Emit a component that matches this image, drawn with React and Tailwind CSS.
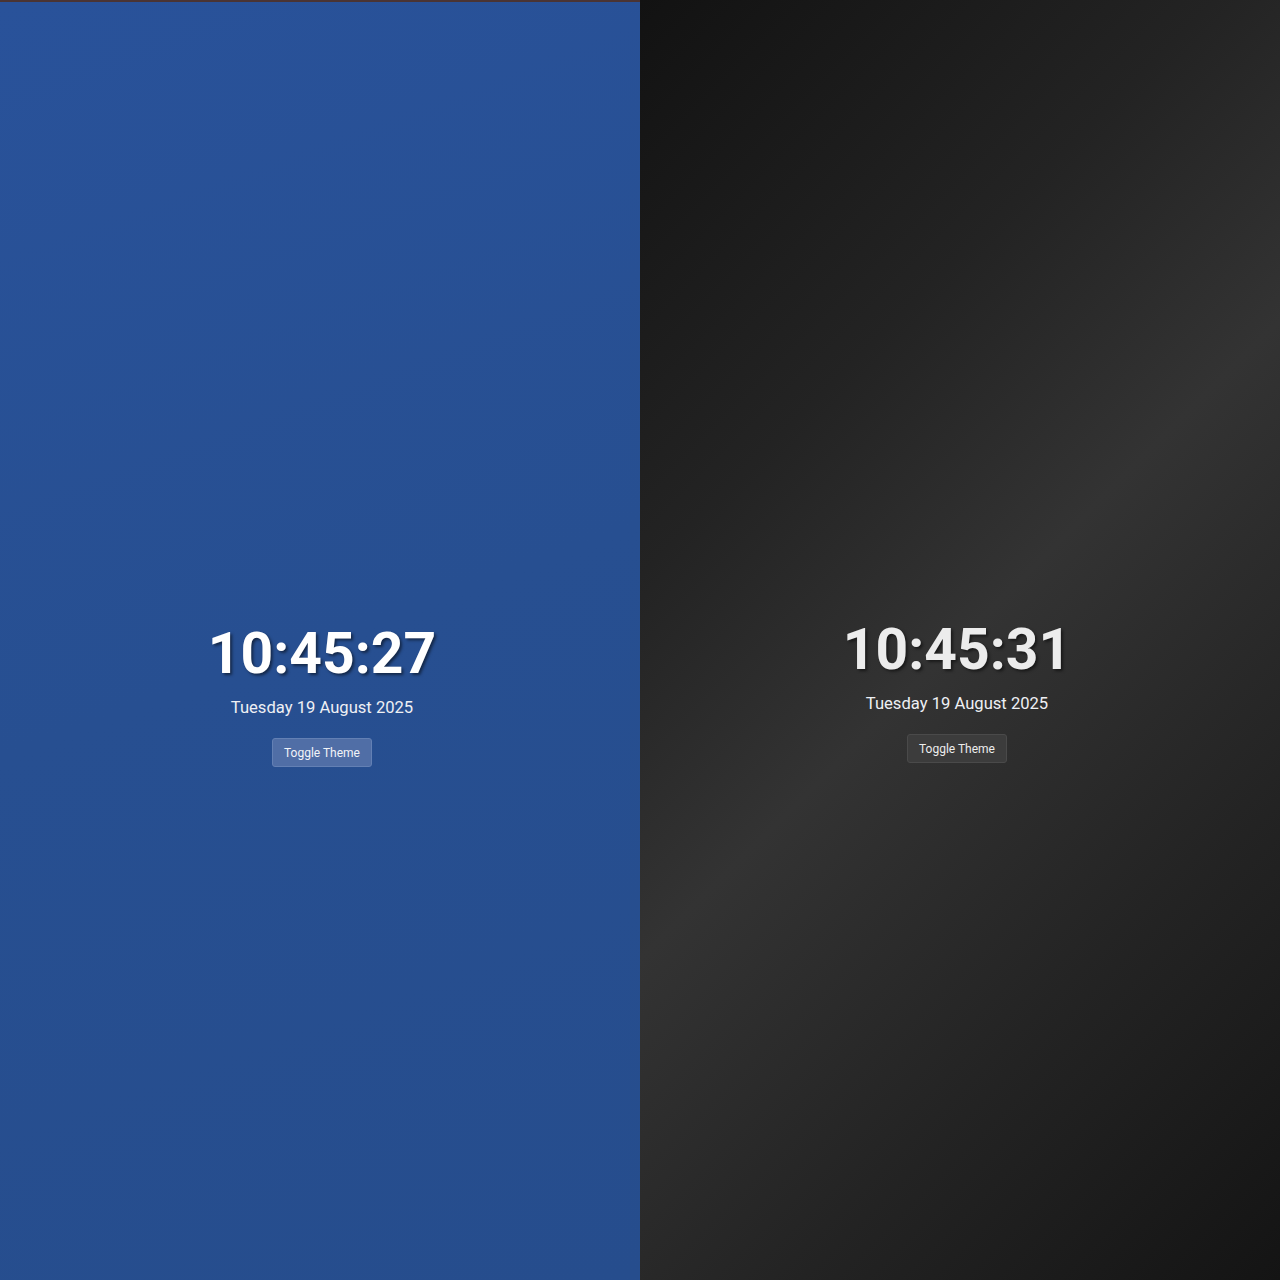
function ClockPanel({ time, dark }) {
  return (
    <section
      className={`flex-1 flex flex-col items-center justify-center pt-[110px] ${
        dark
          ? 'bg-[linear-gradient(135deg,#121212_0%,#232323_30%,#333333_50%,#232323_75%,#141414_100%)]'
          : 'bg-[linear-gradient(160deg,#29529a_0%,#274f91_50%,#264d8d_100%)] border-t-2 border-[#4a3434]'
      }`}
    >
      <div className={`flex flex-col items-center ${dark ? 'pr-[6px] -mt-[6px]' : 'pl-[4px]'}`}>
        <h1
          className={`font-bold text-[57px] leading-none [text-shadow:2px_2px_3px_rgba(0,0,0,0.5)] ${
            dark ? 'text-[#ececec]' : 'text-white'
          }`}
          style={{ fontFamily: 'Roboto, "Noto Sans", sans-serif' }}
        >
          {time}
        </h1>
        <p
          className="mt-[18px] text-[16.6px] leading-none text-[#eef0f4]"
          style={{ fontFamily: 'Roboto, "Noto Sans", sans-serif' }}
        >
          Tuesday 19 August 2025
        </p>
        <button
          className={`mt-[22px] w-[100px] h-[29px] rounded-[3px] text-[12px] border ${
            dark
              ? 'bg-[#3c3c3c] border-[#4a4a4a] text-[#ededed]'
              : 'bg-[#506ea6] border-[#6380b4] text-[#f2f4f8]'
          }`}
          style={{ fontFamily: 'Roboto, "Noto Sans", sans-serif' }}
        >
          Toggle Theme
        </button>
      </div>
    </section>
  );
}

export default function App() {
  return (
    <div className="flex w-full h-[1280px]">
      <ClockPanel time="10:45:27" />
      <ClockPanel time="10:45:31" dark />
    </div>
  );
}
